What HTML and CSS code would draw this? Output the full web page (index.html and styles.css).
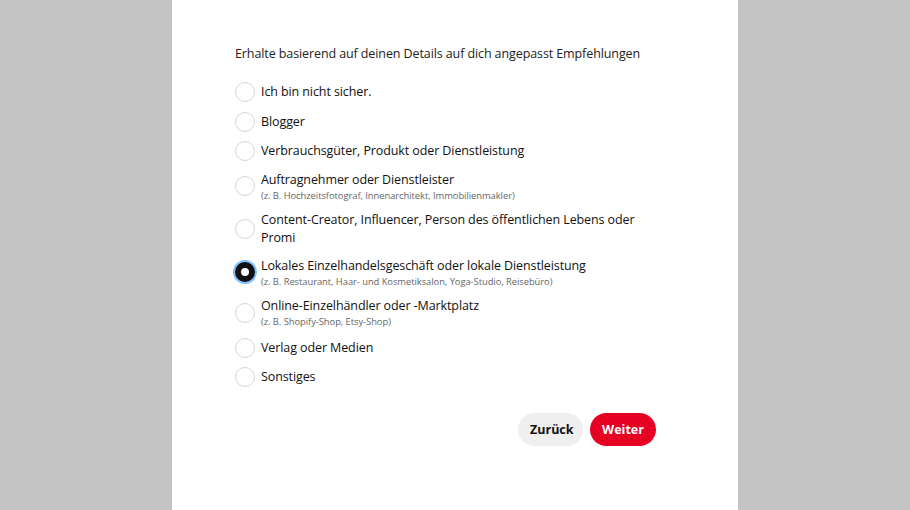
FILE: index.html
```html
<!DOCTYPE html>
<html lang="de">
<head>
<meta charset="utf-8">
<link rel="stylesheet" href="styles.css">
</head>
<body>
<div class="page">
  <main class="panel">
    <div class="content">
      <p class="heading">Erhalte basierend auf deinen Details auf dich angepasst Empfehlungen</p>
      <div class="options">
        <label class="option"><span class="radio"></span><span class="text"><span class="title">Ich bin nicht sicher.</span></span></label>
        <label class="option"><span class="radio"></span><span class="text"><span class="title">Blogger</span></span></label>
        <label class="option"><span class="radio"></span><span class="text"><span class="title">Verbrauchsgüter, Produkt oder Dienstleistung</span></span></label>
        <label class="option multi"><span class="radio"></span><span class="text"><span class="title">Auftragnehmer oder Dienstleister</span><span class="sub">(z. B. Hochzeitsfotograf, Innenarchitekt, Immobilienmakler)</span></span></label>
        <label class="option multi"><span class="radio"></span><span class="text"><span class="title">Content-Creator, Influencer, Person des öffentlichen Lebens oder Promi</span></span></label>
        <label class="option multi"><span class="radio checked"></span><span class="text"><span class="title">Lokales Einzelhandelsgeschäft oder lokale Dienstleistung</span><span class="sub">(z. B. Restaurant, Haar- und Kosmetiksalon, Yoga-Studio, Reisebüro)</span></span></label>
        <label class="option multi"><span class="radio"></span><span class="text"><span class="title">Online-Einzelhändler oder -Marktplatz</span><span class="sub">(z. B. Shopify-Shop, Etsy-Shop)</span></span></label>
        <label class="option"><span class="radio"></span><span class="text"><span class="title">Verlag oder Medien</span></span></label>
        <label class="option"><span class="radio"></span><span class="text"><span class="title">Sonstiges</span></span></label>
      </div>
      <div class="actions">
        <button class="btn btn-back">Zurück</button>
        <button class="btn btn-next">Weiter</button>
      </div>
    </div>
  </main>
</div>
</body>
</html>
```

FILE: styles.css
```css
* { box-sizing: border-box; }
html, body { margin: 0; padding: 0; }
body {
  background: #c4c4c4;
  font-family: "Open Sans", "Noto Sans", "Liberation Sans", sans-serif;
  color: #111;
}
.page {
  width: 910px;
  height: 510px;
  display: flex;
  justify-content: center;
}
.panel {
  width: 566px;
  height: 510px;
  background: #fff;
  padding: 45px 0 0 63px;
}
.content {
  width: 421px;
}
.heading {
  margin: 0 0 19px;
  font-size: 12.5px;
  line-height: 18px;
  letter-spacing: -0.1px;
  color: #222;
}
.options {
  display: flex;
  flex-direction: column;
  gap: 9.5px;
}
.option {
  display: flex;
  align-items: center;
  gap: 6px;
  min-height: 20px;
}
.radio {
  flex: none;
  width: 20px;
  height: 20px;
  border-radius: 50%;
  border: 1.5px solid #d6d6d6;
  background: #fff;
}
.radio.checked {
  border: 6.5px solid #111;
  background: #fff;
  box-shadow: 0 0 0 2px #7dc0ff;
}
.text {
  display: flex;
  flex-direction: column;
}
.title {
  font-size: 12.5px;
  line-height: 20px;
  letter-spacing: -0.1px;
  color: #111;
}
.multi .title { line-height: 18px; }
.sub {
  font-size: 9.4px;
  line-height: 13px;
  color: #666;
  letter-spacing: -0.05px;
}
.actions {
  margin-top: 26px;
  display: flex;
  justify-content: flex-end;
  gap: 7px;
}
.btn {
  height: 33px;
  border: none;
  border-radius: 17px;
  font-family: "Open Sans", "Noto Sans", sans-serif;
  font-weight: 700;
  font-size: 12.5px;
  padding: 0 12px;
  cursor: pointer;
}
.btn-back { background: #efefef; color: #111; width: 65px; }
.btn-next { background: #e60023; color: #fff; width: 66px; }
```
